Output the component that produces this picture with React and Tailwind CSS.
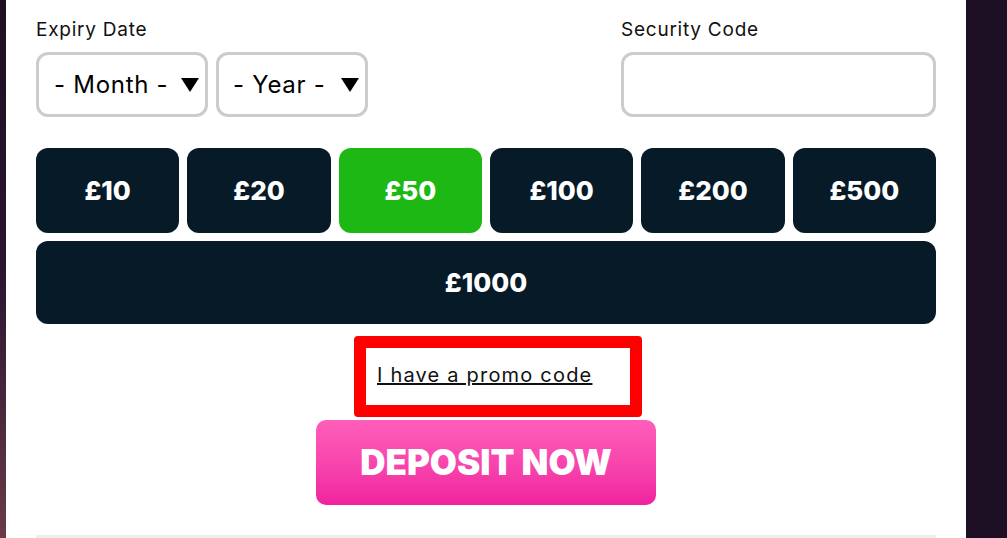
import React from "react";

const amounts = ["£10", "£20", "£50", "£100", "£200", "£500"];

function Caret() {
  return (
    <svg width="18" height="14" viewBox="0 0 18 14" className="shrink-0">
      <path d="M0 0 H18 L9 14 Z" fill="#000" />
    </svg>
  );
}

export default function App() {
  const font = { fontFamily: "Inter, 'Noto Sans', sans-serif" };
  return (
    <div className="w-[1007px] h-[538px] overflow-hidden flex bg-[#1c1024]" style={font}>
      <div className="w-[6px] h-full bg-gradient-to-b from-[#1e1022] via-[#2a1530] to-[#6a3a48]" />
      <div className="w-[960px] h-full bg-white px-[30px] flex flex-col">
        <div className="flex justify-between pt-[17px]">
          <div className="flex flex-col">
            <span className="text-[19px] leading-[26px] tracking-[0.04em] text-[#111]">Expiry Date</span>
            <div className="flex gap-[8px] mt-[9px]">
              <div className="w-[172px] h-[65px] border-[3px] border-[#cccccc] rounded-[12px] flex items-center justify-between pl-[15px] pr-[6px]">
                <span className="text-[24px] tracking-[0.03em] text-black">- Month -</span>
                <Caret />
              </div>
              <div className="w-[152px] h-[65px] border-[3px] border-[#cccccc] rounded-[12px] flex items-center justify-between pl-[14px] pr-[6px]">
                <span className="text-[24px] tracking-[0.03em] text-black">- Year -</span>
                <Caret />
              </div>
            </div>
          </div>
          <div className="flex flex-col w-[315px]">
            <span className="text-[19px] leading-[26px] tracking-[0.04em] text-[#111]">Security Code</span>
            <div className="mt-[9px] h-[65px] border-[3px] border-[#cccccc] rounded-[12px]" />
          </div>
        </div>
        <div className="grid grid-cols-6 gap-x-[8px] mt-[31px]">
          {amounts.map((a) => (
            <div
              key={a}
              className={
                a === "£50"
                  ? "h-[85px] rounded-[12px] bg-[#1db814] flex items-center justify-center text-white font-extrabold text-[26px]"
                  : "h-[85px] rounded-[12px] bg-[#061a28] flex items-center justify-center text-white font-extrabold text-[26px]"
              }
            >
              {a}
            </div>
          ))}
        </div>
        <div className="mt-[8px] h-[85px] rounded-[12px] bg-[#061a28] flex items-center justify-center text-white font-extrabold text-[26px]">
          £1000
        </div>
        <div className="flex flex-col items-center mt-[12px]">
          <div className="ml-[24px] w-[288px] h-[81px] border-[12px] border-[#ff0000] rounded-[4px] pl-[11px] pt-[12px]">
            <span className="text-[20px] tracking-[0.06em] underline text-[#111] whitespace-nowrap">I have a promo code</span>
          </div>
          <div className="mt-[3px] w-[340px] h-[85px] rounded-[10px] bg-gradient-to-b from-[#ff5ebb] to-[#f0229f] flex items-center justify-center text-white font-black text-[35px]">
            DEPOSIT NOW
          </div>
        </div>
        <div className="mt-[30px] h-[3px] bg-[#eeeeee]" />
      </div>
      <div className="flex-1 h-full bg-[#1d1025]" />
    </div>
  );
}
